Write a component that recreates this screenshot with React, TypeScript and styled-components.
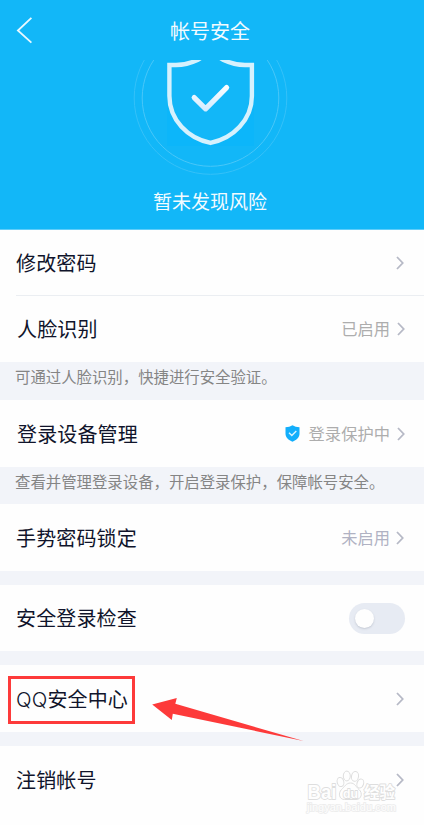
import React from "react";
import styled, { createGlobalStyle } from "styled-components";

const GlobalStyle = createGlobalStyle`
  * { box-sizing: border-box; }
  body {
    margin: 0;
    background: #fefefe;
    font-family: "Noto Sans CJK SC", sans-serif;
  }
`;

const Screen = styled.main`
  position: relative;
  display: flex;
  flex-direction: column;
  width: 424px;
  height: 825px;
  overflow: hidden;
  background: #fefefe;
`;

const Header = styled.header`
  display: flex;
  flex-direction: column;
  height: 230px;
  flex: none;
  background: #12b7f8;
  border-bottom: 1px solid #5fcdf9;
  color: #f2fbff;
`;

const NavBar = styled.nav`
  display: grid;
  grid-template-columns: 60px 1fr 64px;
  align-items: center;
  height: 60px;
`;

const BackIcon = styled.svg`
  display: block;
  margin-left: 16px;
`;

const Title = styled.h1`
  margin: 0;
  padding-top: 1px;
  text-align: center;
  font-size: 20px;
  line-height: 30px;
  font-weight: 400;
`;

const ShieldArt = styled.svg`
  display: block;
  margin-left: 130px;
`;

const Status = styled.p`
  margin: 8px 4px 0 0;
  text-align: center;
  font-size: 19px;
  line-height: 30px;
`;

const Row = styled.section<{ $height: number; $inset?: number; $drop?: number }>`
  display: flex;
  align-items: center;
  flex: none;
  height: ${(p) => p.$height}px;
  padding: ${(p) => p.$drop ?? 0}px ${(p) => p.$inset ?? 20}px 0 16px;
  background: #fefefe;
`;

const Label = styled.span<{ $shift?: number }>`
  flex: 1;
  padding-left: ${(p) => p.$shift ?? 0}px;
  font-size: 20px;
  line-height: 30px;
  letter-spacing: 0.13px;
  color: #10142b;
`;

const Latin = styled.span`
  font-family: Inter, sans-serif;
  font-weight: 300;
  font-size: 20.5px;
`;

const Value = styled.span<{ $cool?: boolean }>`
  margin: -2px ${(p) => (p.$cool ? 6 : 7)}px 0 0;
  font-size: 16.3px;
  line-height: 24px;
  color: ${(p) => (p.$cool ? "#b0b2c3" : "#adadad")};
`;

const Note = styled.p<{ $height: number }>`
  flex: none;
  height: ${(p) => p.$height}px;
  margin: 0;
  padding: 2px 0 0 15px;
  background: #f2f4f9;
  color: #858585;
  font-size: 15.4px;
  line-height: 24px;
  white-space: nowrap;
`;

const Divider = styled.hr`
  flex: none;
  width: 408px;
  height: 1px;
  margin: 0 0 0 16px;
  border: 0;
  background: #ebeef2;
`;

const Gap = styled.div`
  flex: none;
  height: 14px;
  background: #f2f4f9;
`;

const Toggle = styled.button`
  display: flex;
  align-items: center;
  width: 56px;
  height: 31px;
  padding: 0 0 0 6px;
  border: 0;
  border-radius: 16px;
  background: #e7ebf3;
`;

const Knob = styled.span`
  width: 19px;
  height: 19px;
  border-radius: 50%;
  background: #fefefe;
  box-shadow: 0 1px 2px rgba(90, 100, 120, 0.25);
`;

const Badge = styled.svg`
  margin-right: 9px;
`;

const Highlight = styled.div`
  position: absolute;
  left: 8px;
  top: 676px;
  width: 127px;
  height: 48px;
  border: 3px solid #fd3a3a;
`;

const Arrow = styled.svg`
  position: absolute;
  left: 150px;
  top: 696px;
`;

const Watermark = styled.svg`
  position: absolute;
  left: 300px;
  top: 766px;
`;

const Chevron = () => (
  <svg width="8" height="14" viewBox="0 0 8 14" fill="none">
    <path d="M1 1 6.7 7l-5.7 6" stroke="#b6b9c6" strokeWidth="1.8" />
  </svg>
);

export default function App() {
  return (
    <>
      <GlobalStyle />
      <Screen>
        <Header>
          <NavBar>
            <BackIcon width="18" height="28" viewBox="0 0 18 28" fill="none">
              <path d="M15.4 1.8 1.9 14.5 15.4 26.6" stroke="#e8f8ff" strokeWidth="1.8" />
            </BackIcon>
            <Title>帐号安全</Title>
          </NavBar>
          <ShieldArt width="160" height="118" viewBox="130 60 160 118" fill="none">
            <defs>
              <linearGradient id="tick" x1="0" y1="84" x2="0" y2="112" gradientUnits="userSpaceOnUse">
                <stop stopColor="#ffffff" />
                <stop offset="1" stopColor="#cfeaff" />
              </linearGradient>
            </defs>
            <circle cx="210.5" cy="98" r="76.3" stroke="#35c1f8" />
            <circle cx="210.5" cy="98" r="68.3" stroke="#49c7f8" />
            <path d="M167 60h87v86h-87z" fill="#0cb6fa" />
            <path
              d="M169.4 65H176C184 65 191 63 197.5 60L210.5 52L223.5 60C230 63 237 65 245 65H251.9V96C251.9 120 233 138.5 210.5 142.9C188 138.5 169.4 120 169.4 96Z"
              fill="#12b7f8"
              stroke="#d6f1fd"
              strokeWidth="4.4"
            />
            <path
              d="M194.2 97.6 205.6 108.8 226.6 87.6"
              stroke="url(#tick)"
              strokeWidth="5.2"
              strokeLinecap="round"
              strokeLinejoin="round"
            />
          </ShieldArt>
          <Status>暂未发现风险</Status>
        </Header>

        <Row $height={65} $drop={1}>
          <Label>修改密码</Label>
          <Chevron />
        </Row>
        <Divider />
        <Row $height={66} $inset={19}>
          <Label $shift={1}>人脸识别</Label>
          <Value>已启用</Value>
          <Chevron />
        </Row>
        <Note $height={38}>可通过人脸识别，快捷进行安全验证。</Note>
        <Row $height={67} $inset={19}>
          <Label $shift={1}>登录设备管理</Label>
          <Badge width="15" height="17" viewBox="0 0 15 17" fill="none">
            <path
              d="M7.5.3C9.5 1.6 11.8 2.2 14.5 2.2V8.6C14.5 12.5 11.5 15.4 7.5 16.7C3.5 15.4.5 12.5.5 8.6V2.2C3.2 2.2 5.5 1.6 7.5.3Z"
              fill="#12aefb"
            />
            <path d="M4 7.8 6.8 10.5 11.3 6" stroke="#d9f3ff" strokeWidth="1.4" />
          </Badge>
          <Value>登录保护中</Value>
          <Chevron />
        </Row>
        <Note $height={37}>查看并管理登录设备，开启登录保护，保障帐号安全。</Note>
        <Row $height={67}>
          <Label>手势密码锁定</Label>
          <Value $cool>未启用</Value>
          <Chevron />
        </Row>
        <Gap />
        <Row $height={66} $inset={19}>
          <Label>安全登录检查</Label>
          <Toggle aria-label="安全登录检查">
            <Knob />
          </Toggle>
        </Row>
        <Gap />
        <Row $height={67} $drop={1}>
          <Label>
            <Latin>QQ</Latin>安全中心
          </Label>
          <Chevron />
        </Row>
        <Gap />
        <Row $height={67}>
          <Label>注销帐号</Label>
          <Chevron />
        </Row>

        <Highlight />
        <Arrow width="156" height="48" viewBox="150 696 156 48">
          <path d="M152.2 704.4 176.8 698 175.3 703.8 303.5 741 172.8 713.8 171.8 720Z" fill="#fd3a3a" />
        </Arrow>
        <Watermark width="104" height="52" viewBox="300 766 104 52">
          <g fill="#fefefe" stroke="#dedede" strokeWidth="1">
            <ellipse cx="340.5" cy="782" rx="3.3" ry="4.6" transform="rotate(-15 340.5 782)" />
            <ellipse cx="346.8" cy="776" rx="3.5" ry="4.9" />
            <ellipse cx="355" cy="776.4" rx="3.5" ry="4.9" transform="rotate(10 355 776.4)" />
            <ellipse cx="360.3" cy="783.5" rx="3.3" ry="4.6" transform="rotate(18 360.3 783.5)" />
            <path d="M350.5 783C355 783 356 787 359 789.5C363 793 361.5 799.5 356 799.5H344.5C339 799.5 338 793 341.5 789.5C344.5 787 346 783 350.5 783Z" />
            <g paintOrder="stroke" strokeWidth="1.8" strokeLinejoin="round">
              <text x="307.5" y="799" fontFamily="Liberation Sans, sans-serif" fontWeight="700" fontSize="20" textLength="29" lengthAdjust="spacingAndGlyphs">Bai</text>
              <text x="343" y="797.5" fontFamily="Liberation Sans, sans-serif" fontWeight="700" fontSize="13" textLength="15" lengthAdjust="spacingAndGlyphs">du</text>
              <text x="364" y="798" fontFamily="Noto Sans CJK SC, sans-serif" fontWeight="700" fontSize="15.5">经验</text>
            </g>
            <text x="307" y="811" fontFamily="Liberation Sans, sans-serif" fontSize="10" textLength="89" lengthAdjust="spacingAndGlyphs" paintOrder="stroke" stroke="#ececec" strokeWidth="1.6">jingyan.baidu.com</text>
          </g>
        </Watermark>
      </Screen>
    </>
  );
}
